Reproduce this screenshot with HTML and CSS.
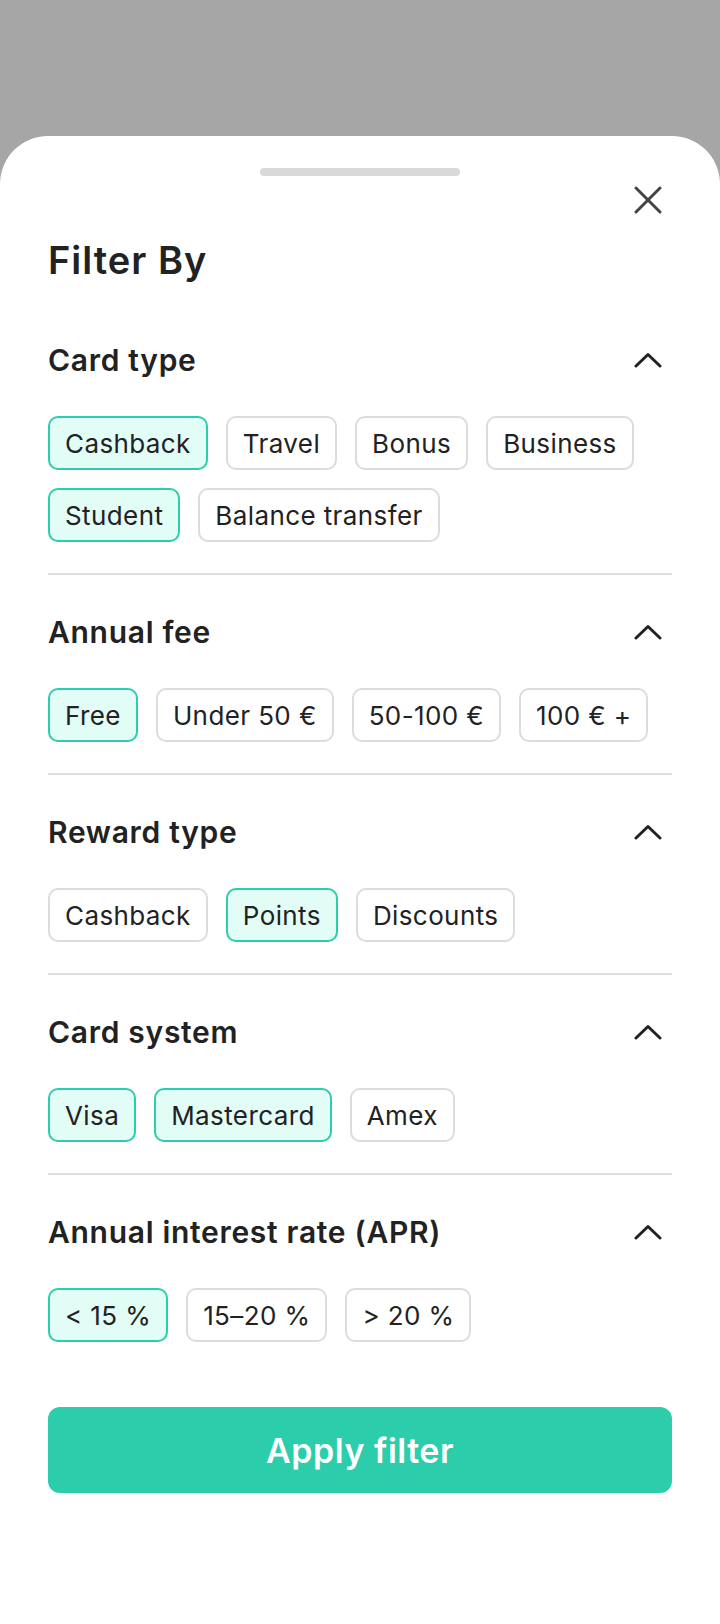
FILE: index.html
```html
<!DOCTYPE html>
<html lang="en">
<head>
    <meta charset="UTF-8">
    <meta name="viewport" content="width=device-width, initial-scale=1.0">
    <title>Filter By</title>
    <link rel="stylesheet" href="styles.css">
</head>
<body>
    <div class="sheet">
        <span class="handle"></span>
        <button class="close" type="button" aria-label="Close">
            <svg width="28" height="28" viewBox="0 0 28 28"><path d="M2 2L26 26M26 2L2 26" stroke="#444" stroke-width="3" stroke-linecap="round"/></svg>
        </button>
        <h1 class="title">Filter By</h1>

        <section class="group">
            <div class="group-head">
                <h2>Card type</h2>
                <svg class="chev" width="28" height="16" viewBox="0 0 28 16"><polyline points="2,14 14,2.5 26,14" fill="none" stroke="#222" stroke-width="3" stroke-linecap="round" stroke-linejoin="round"/></svg>
            </div>
            <div class="chips">
                <span class="chip on">Cashback</span>
                <span class="chip">Travel</span>
                <span class="chip">Bonus</span>
                <span class="chip">Business</span>
                <span class="chip on">Student</span>
                <span class="chip">Balance transfer</span>
            </div>
        </section>

        <section class="group">
            <div class="group-head">
                <h2>Annual fee</h2>
                <svg class="chev" width="28" height="16" viewBox="0 0 28 16"><polyline points="2,14 14,2.5 26,14" fill="none" stroke="#222" stroke-width="3" stroke-linecap="round" stroke-linejoin="round"/></svg>
            </div>
            <div class="chips">
                <span class="chip on">Free</span>
                <span class="chip">Under 50 €</span>
                <span class="chip">50-100 €</span>
                <span class="chip">100 € +</span>
            </div>
        </section>

        <section class="group">
            <div class="group-head">
                <h2>Reward type</h2>
                <svg class="chev" width="28" height="16" viewBox="0 0 28 16"><polyline points="2,14 14,2.5 26,14" fill="none" stroke="#222" stroke-width="3" stroke-linecap="round" stroke-linejoin="round"/></svg>
            </div>
            <div class="chips">
                <span class="chip">Cashback</span>
                <span class="chip on">Points</span>
                <span class="chip">Discounts</span>
            </div>
        </section>

        <section class="group">
            <div class="group-head">
                <h2>Card system</h2>
                <svg class="chev" width="28" height="16" viewBox="0 0 28 16"><polyline points="2,14 14,2.5 26,14" fill="none" stroke="#222" stroke-width="3" stroke-linecap="round" stroke-linejoin="round"/></svg>
            </div>
            <div class="chips">
                <span class="chip on">Visa</span>
                <span class="chip on">Mastercard</span>
                <span class="chip">Amex</span>
            </div>
        </section>

        <section class="group last">
            <div class="group-head">
                <h2>Annual interest rate (APR)</h2>
                <svg class="chev" width="28" height="16" viewBox="0 0 28 16"><polyline points="2,14 14,2.5 26,14" fill="none" stroke="#222" stroke-width="3" stroke-linecap="round" stroke-linejoin="round"/></svg>
            </div>
            <div class="chips">
                <span class="chip on">&lt; 15 %</span>
                <span class="chip">15–20 %</span>
                <span class="chip">&gt; 20 %</span>
            </div>
        </section>

        <button class="apply" type="button">Apply filter</button>
    </div>
</body>
</html>
```

FILE: styles.css
```css
* {
    box-sizing:border-box;
}
html, body {
    margin:0; padding:0;
}
body {
    background:#a6a6a6;
    font-family:Inter, "Noto Sans", sans-serif;
    color:#222;
    min-height:1624px;
}
.sheet {
    position:relative;
    margin-top:136px;
    min-height:1488px;
    background:#fff;
    border-radius:48px 48px 0 0;
    padding:32px 48px 0;
}
.handle {
    display:block;
    width:200px; height:8px;
    margin:0 auto;
    background:#d9d9d9;
    border-radius:4px;
}
/* close icon sits over the header area */
.close {
    position:absolute;
    right:58px; top:50px;
    width:28px; height:28px;
    padding:0; border:0; background:none;
    display:block;
}
.close svg {display:block;}
.title {
    margin:62px 0 0;
    font-size:38px; line-height:44px;
    font-weight:600;
    letter-spacing:1px;
}
.group {
    padding:40px 0 31px;
    border-bottom:2px solid #dedede;
}
.group:first-of-type {padding-top:61px;}
.group.last {border-bottom:0; padding-bottom:0;}
.group-head {
    display:flex;
    justify-content:space-between;
    align-items:center;
    height:34px;
}
.group-head h2 {
    margin:0;
    font-size:30px; line-height:34px;
    font-weight:600;
    letter-spacing:0.7px;
}
.chev {display:block; margin-right:10px;}
.chips {
    display:flex;
    flex-wrap:wrap;
    gap:18px;
    margin-top:39px;
}
.chip {
    display:inline-flex;
    align-items:center;
    height:54px;
    padding:0 15px;
    border:2px solid #dcdcdc;
    border-radius:10px;
    font-size:26px;
    letter-spacing:0.4px;
    background:#fff;
}
.chip.on {
    border-color:#2bcdab;
    background:#e2fcf6;
}
.apply {
    display:block;
    width:100%; height:86px;
    margin-top:65px;
    border:0; border-radius:12px;
    background:#2bcdab;
    color:#fff;
    font-family:Inter, "Noto Sans", sans-serif;
    font-size:34px; font-weight:600;
    letter-spacing:0.5px;
}
```
